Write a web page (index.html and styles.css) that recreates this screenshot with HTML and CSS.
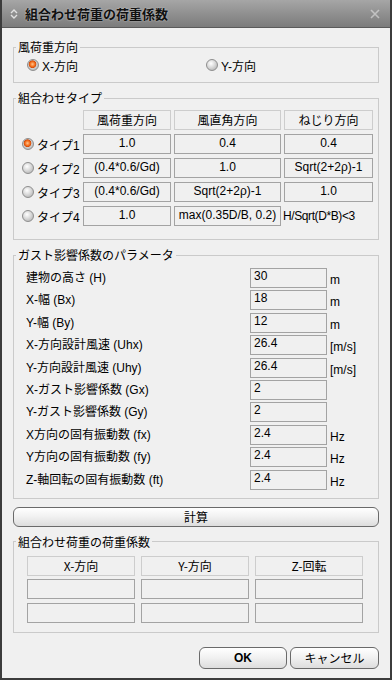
FILE: index.html
```html
<!DOCTYPE html>
<html lang="ja">
  <head>
    <meta charset="UTF-8" />
    <meta name="viewport" content="width=device-width, initial-scale=1.0" />
    <title>組合わせ荷重の荷重係数</title>
    <link rel="stylesheet" href="styles.css">
  </head>
  <body>
    <div class="window">
      <div class="titlebar">
        <svg class="title-icon" width="8" height="12" viewBox="0 0 8 12">
          <polyline points="1,5 4,2 7,5" fill="none" stroke="#e2e2e2" stroke-width="1.4" />
          <polyline points="1,7 4,10 7,7" fill="none" stroke="#e2e2e2" stroke-width="1.4" />
        </svg>
        <span class="title">組合わせ荷重の荷重係数</span>
        <svg class="close-icon" width="10" height="10" viewBox="0 0 10 10">
          <path d="M1 1 L9 9 M9 1 L1 9" stroke="rgba(235,235,235,0.55)" stroke-width="1.6" />
        </svg>
      </div>

      <div class="content">
        <!-- wind load direction -->
        <fieldset class="group">
          <legend>風荷重方向</legend>
          <div class="dir-row">
            <label class="radio-label"><span class="radio checked"></span>X-方向</label>
            <label class="radio-label"><span class="radio"></span>Y-方向</label>
          </div>
        </fieldset>

        <!-- combination type -->
        <fieldset class="group">
          <legend>組合わせタイプ</legend>
          <div class="type-grid">
            <span></span>
            <span class="cell head">風荷重方向</span>
            <span class="cell head">風直角方向</span>
            <span class="cell head">ねじり方向</span>

            <label class="radio-label"><span class="radio checked"></span>タイプ1</label>
            <span class="cell">1.0</span>
            <span class="cell">0.4</span>
            <span class="cell">0.4</span>

            <label class="radio-label"><span class="radio"></span>タイプ2</label>
            <span class="cell">(0.4*0.6/Gd)</span>
            <span class="cell">1.0</span>
            <span class="cell">Sqrt(2+2ρ)-1</span>

            <label class="radio-label"><span class="radio"></span>タイプ3</label>
            <span class="cell">(0.4*0.6/Gd)</span>
            <span class="cell">Sqrt(2+2ρ)-1</span>
            <span class="cell">1.0</span>

            <label class="radio-label"><span class="radio"></span>タイプ4</label>
            <span class="cell">1.0</span>
            <span class="cell">max(0.35D/B, 0.2)</span>
            <span class="note">H/Sqrt(D*B)&lt;3</span>
          </div>
        </fieldset>

        <!-- gust parameters -->
        <fieldset class="group">
          <legend>ガスト影響係数のパラメータ</legend>
          <div class="param-grid">
            <span class="param-label">建物の高さ (H)</span><span class="field">30</span><span class="unit">m</span>
            <span class="param-label">X-幅 (Bx)</span><span class="field">18</span><span class="unit">m</span>
            <span class="param-label">Y-幅 (By)</span><span class="field">12</span><span class="unit">m</span>
            <span class="param-label">X-方向設計風速 (Uhx)</span><span class="field">26.4</span><span class="unit">[m/s]</span>
            <span class="param-label">Y-方向設計風速 (Uhy)</span><span class="field">26.4</span><span class="unit">[m/s]</span>
            <span class="param-label">X-ガスト影響係数 (Gx)</span><span class="field">2</span><span class="unit"></span>
            <span class="param-label">Y-ガスト影響係数 (Gy)</span><span class="field">2</span><span class="unit"></span>
            <span class="param-label">X方向の固有振動数 (fx)</span><span class="field">2.4</span><span class="unit">Hz</span>
            <span class="param-label">Y方向の固有振動数 (fy)</span><span class="field">2.4</span><span class="unit">Hz</span>
            <span class="param-label">Z-軸回転の固有振動数 (ft)</span><span class="field">2.4</span><span class="unit">Hz</span>
          </div>
        </fieldset>

        <button class="btn calc">計算</button>

        <!-- result -->
        <fieldset class="group">
          <legend>組合わせ荷重の荷重係数</legend>
          <div class="result-grid">
            <span class="cell head">X-方向</span>
            <span class="cell head">Y-方向</span>
            <span class="cell head">Z-回転</span>
            <span class="cell"></span>
            <span class="cell"></span>
            <span class="cell"></span>
            <span class="cell"></span>
            <span class="cell"></span>
            <span class="cell"></span>
          </div>
        </fieldset>

        <div class="actions">
          <button class="btn ok">OK</button>
          <button class="btn cancel">キャンセル</button>
        </div>
      </div>
    </div>
  </body>
</html>
```

FILE: styles.css
```css
* {
  margin: 0;
  padding: 0;
  box-sizing: border-box;
}
body {
  width: 392px;
  height: 680px;
  background-color: #f0f0f0;
  color: #000;
  font-family: "Liberation Sans", "Noto Sans CJK JP", sans-serif;
  font-size: 12px;
}
.window {
  width: 392px;
  height: 680px;
  border: 2px solid #3c3c3c;
  border-top: none;
  background-color: #f0f0f0;
}
.titlebar {
  height: 28px;
  display: flex;
  align-items: center;
  padding: 0 10px 0 8px;
  background: linear-gradient(#a6a6a6, #8e8e8e 55%, #7c7c7c);
  border-bottom: 1px solid #5a5a5a;
}
.title-icon {
  margin-right: 7px;
}
.title {
  font-family: "Noto Sans CJK JP", sans-serif;
  font-size: 13px;
  font-weight: bold;
  color: #111;
  text-shadow: 0 0 2px rgba(255, 255, 255, 0.55);
}
.close-icon {
  margin-left: auto;
}
.content {
  padding: 0 11px;
}

/* group boxes */
.group {
  border: 1px solid #cacaca;
  margin-top: 7px;
  padding: 0;
}
.group:first-child {
  margin-top: 11px;
}
.group legend {
  margin-left: 2px;
  padding: 0 2px;
  line-height: 16px;
  font-family: "Noto Sans CJK JP", sans-serif;
}

/* radios */
.radio-label {
  display: flex;
  align-items: center;
  gap: 3px;
}
.radio {
  width: 12px;
  height: 12px;
  border-radius: 50%;
  border: 1px solid #8e8e8e;
  background: radial-gradient(circle at 40% 35%, #ffffff 0, #dedede 40%, #a9a9a9 100%);
}
.radio.checked {
  background: radial-gradient(circle at 45% 42%, #ffc48e 0, #f4701e 30%, #d44c0a 44%, #cfcfcf 52%, #a4a4a4 100%);
}
.dir-row {
  display: grid;
  grid-template-columns: 179px auto;
  height: 20px;
  align-items: center;
  padding: 0 0 0 13px;
  margin-bottom: 7px;
}

/* cells */
.cell {
  display: block;
  height: 20px;
  line-height: 17px;
  text-align: center;
  border: 1px solid #a3a3a3;
  white-space: nowrap;
  overflow: hidden;
}
.cell.head {
  border-color: #cdcdcd;
  font-family: "Noto Sans CJK JP", sans-serif;
}
.type-grid {
  display: grid;
  grid-template-columns: 58px 88px 107px 89px;
  grid-auto-rows: 20px;
  column-gap: 3px;
  row-gap: 4px;
  padding: 4px 0 13px 8px;
}
.note {
  line-height: 20px;
  white-space: nowrap;
  margin-left: -1px;
  letter-spacing: -0.4px;
}

/* parameters */
.param-grid {
  display: grid;
  grid-template-columns: 224px 77px auto;
  grid-auto-rows: 20px;
  row-gap: 2.4px;
  padding: 5px 0 8px 12px;
}
.param-label {
  line-height: 20px;
  white-space: nowrap;
}
.field {
  border: 1px solid #a3a3a3;
  padding: 0 3px;
  line-height: 15px;
}
.unit {
  padding: 5px 0 0 3px;
  line-height: 15px;
}

/* buttons */
.btn {
  font-family: "Noto Sans CJK JP", sans-serif;
  font-size: 12px;
  color: #000;
  border: 1px solid #6a6a6a;
  border-radius: 6px;
  background: linear-gradient(#ffffff, #f2f2f2 45%, #dddddd);
}
.calc {
  display: block;
  width: 100%;
  height: 20px;
  margin-top: 8px;
  line-height: 16px;
}
.result-grid {
  display: grid;
  grid-template-columns: repeat(3, 108px);
  grid-template-rows: 19px 20px 20px;
  column-gap: 6px;
  row-gap: 4px;
  padding: 6px 0 9px 13px;
}
.actions {
  display: flex;
  justify-content: flex-end;
  gap: 3px;
  margin-top: 14px;
}
.ok,
.cancel {
  height: 22px;
  width: 88px;
}
.ok {
  font-family: "Liberation Sans", sans-serif;
  font-weight: bold;
}
.cancel {
  width: 89px;
}
```
